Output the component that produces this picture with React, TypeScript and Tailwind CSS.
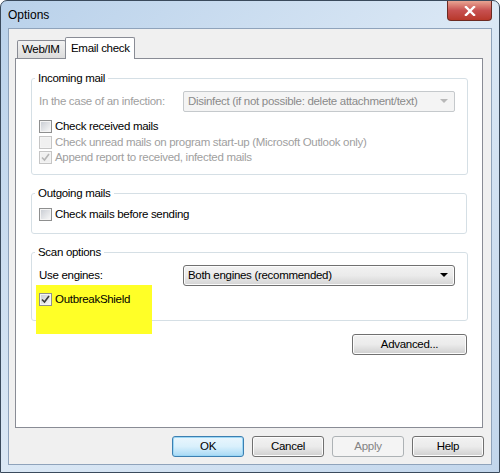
import React from "react";

const font = { fontFamily: '"Segoe UI", "Liberation Sans", Arial, sans-serif', letterSpacing: "-0.3px" };

function Check({ checked, disabled, label }: { checked?: boolean; disabled?: boolean; label: string }) {
  return (
    <div className="flex items-center h-[15px] whitespace-nowrap">
      <div
        className={
          "w-[13px] h-[13px] border flex items-center justify-center shrink-0 " +
          (disabled ? "border-[#c5c5c5] bg-[#f4f4f4]" : "border-[#8e8f8f] bg-[#f4f4f4]")
        }
      >
        <div
          className={
            "w-[9px] h-[9px] flex items-center justify-center " +
            (disabled ? "bg-[#f0f0f0]" : "bg-gradient-to-br from-[#cbcfd5] to-[#f6f6f6]")
          }
        >
          {checked && (
            <svg width="9" height="9" viewBox="0 0 9 9">
              <path
                d="M1 4.5 L3.5 7 L8 1"
                fill="none"
                stroke={disabled ? "#b5b5b5" : "#3a3a3a"}
                strokeWidth="1.6"
              />
            </svg>
          )}
        </div>
      </div>
      <span className={"ml-[3px] " + (disabled ? "text-[#a0a0a0]" : "text-black")}>{label}</span>
    </div>
  );
}

function Group({ title, children, cls }: { title: string; children: React.ReactNode; cls: string }) {
  return (
    <fieldset className={"border border-[#d5dfe5] rounded-[3px] pl-[7px] pr-[12px] " + cls}>
      <legend className="ml-[-4px] px-[3px] leading-[14px] text-black">{title}</legend>
      {children}
    </fieldset>
  );
}

function Btn({ label, def, disabled, cls }: { label: string; def?: boolean; disabled?: boolean; cls?: string }) {
  return (
    <div
      className={
        "h-[21px] rounded-[3px] border flex items-center justify-center whitespace-nowrap " +
        (disabled
          ? "border-[#adb2b5] bg-[#f4f4f4] text-[#838383] "
          : def
          ? "border-[#3c7fb1] bg-gradient-to-b from-[#eaf6fd] via-[#d9f0fc] to-[#a7d9f5] text-black shadow-[inset_0_0_0_1px_#9cd7f5] "
          : "border-[#707070] bg-gradient-to-b from-[#f2f2f2] via-[#ebebeb] to-[#cfcfcf] text-black shadow-[inset_0_0_0_1px_#fcfcfc] ") +
        (cls || "w-[72px]")
      }
    >
      {label}
    </div>
  );
}

export default function App() {
  return (
    <div
      className="w-[500px] h-[473px] text-[11.5px] leading-[15px] overflow-hidden rounded-t-[7px] border border-[#3a4a5c] bg-gradient-to-br from-[#b9d1ea] via-[#dbe8f5] to-[#c2d6ec] flex flex-col"
      style={font}
    >
      <div className="h-[27px] flex items-start justify-between shrink-0">
        <div className="pl-[7px] pt-[7px] text-[12px] text-black tracking-normal">Options</div>
        <div className="mr-[7px] w-[45px] h-[20px] rounded-b-[4px] border border-t-0 border-[#6b2a22] bg-gradient-to-b from-[#e8a493] via-[#c75050] to-[#b8382a] flex items-center justify-center">
          <svg width="12" height="10" viewBox="0 0 12 10">
            <path d="M2 1 L10 9 M10 1 L2 9" stroke="#fff" strokeWidth="2.4" strokeLinecap="square" />
          </svg>
        </div>
      </div>
      <div className="mx-[7px] flex-1 mb-[7px] bg-[#f0f0f0] border border-[#8fa3bb] flex flex-col">
        <div className="pl-[6px] pr-[8px] pt-[8px]">
          <div className="flex items-end h-[21px] whitespace-nowrap">
            <div className="h-[18px] px-[4px] border border-b-0 border-[#898c95] rounded-t-[2px] bg-gradient-to-b from-[#f2f2f2] to-[#dcdcdc] flex items-center w-[49px] ml-[2px]">
              Web/IM
            </div>
            <div className="h-[22px] mb-[-1px] px-[5px] border border-b-0 border-[#898c95] rounded-t-[2px] bg-white flex items-center w-[70px] ml-[-1px] z-10 relative">
              Email check
            </div>
          </div>
          <div className="h-[370px] bg-white border border-[#898c95] px-[15px] pt-[12px]">
            <Group title="Incoming mail" cls="h-[104px]">
              <div className="flex items-center h-[22px] mt-[5px] whitespace-nowrap">
                <span className="text-[#a0a0a0] w-[144px]">In the case of an infection:</span>
                <div className="h-[21px] w-[272px] border border-[#c5c9cc] rounded-[2px] bg-[#f4f4f4] flex items-center pl-[4px] pr-[6px] justify-between text-[#8a8a8a]">
                  <span>Disinfect (if not possible: delete attachment/text)</span>
                  <svg width="8" height="5" viewBox="0 0 8 5">
                    <path d="M0 0 H8 L4 4 Z" fill="#b8b8b8" />
                  </svg>
                </div>
              </div>
              <div className="mt-[7px] flex flex-col gap-[0.5px]">
                <Check label="Check received mails" />
                <Check disabled label="Check unread mails on program start-up (Microsoft Outlook only)" />
                <Check disabled checked label="Append report to received, infected mails" />
              </div>
            </Group>
            <Group title="Outgoing mails" cls="h-[48px] mt-[11px]">
              <div className="mt-[7px]">
                <Check label="Check mails before sending" />
              </div>
            </Group>
            <Group title="Scan options" cls="h-[76px] mt-[11px]">
              <div className="flex items-center h-[22px] mt-[5px] whitespace-nowrap">
                <span className="w-[144px]">Use engines:</span>
                <div className="h-[21px] w-[272px] border border-[#707070] rounded-[3px] bg-gradient-to-b from-[#f2f2f2] via-[#ebebeb] to-[#d4d4d4] flex items-center pl-[4px] pr-[6px] justify-between shadow-[inset_0_0_0_1px_#fcfcfc]">
                  <span>Both engines (recommended)</span>
                  <svg width="8" height="5" viewBox="0 0 8 5">
                    <path d="M0 0 H8 L4 4 Z" fill="#000" />
                  </svg>
                </div>
              </div>
              <div className="ml-[-3px] mt-[-1px] w-[116px] h-[49px] bg-[#ffff27] pl-[3px] pt-[7px]">
                <Check checked label="OutbreakShield" />
              </div>
            </Group>
            <div className="flex justify-end mt-[13px]">
              <Btn label="Advanced..." cls="w-[115px]" />
            </div>
          </div>
        </div>
        <div className="flex justify-end gap-[8px] pr-[7px] mt-[8px]">
          <Btn label="OK" def />
          <Btn label="Cancel" />
          <Btn label="Apply" disabled />
          <Btn label="Help" />
        </div>
      </div>
    </div>
  );
}
